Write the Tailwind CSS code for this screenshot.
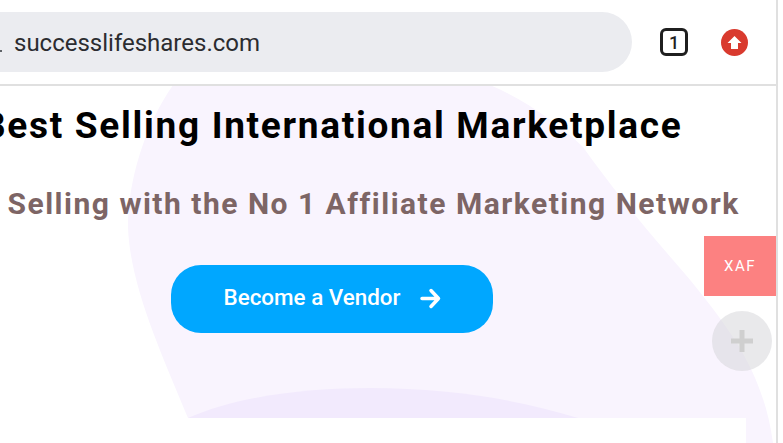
<!DOCTYPE html>
<html><head><meta charset="utf-8"><script src="https://cdn.jsdelivr.net/npm/@tailwindcss/browser@4"></script></head>
<body class="m-0 bg-white">
<div class="relative w-[783px] h-[443px] overflow-hidden bg-white font-['Roboto',sans-serif]">
  <svg class="absolute left-0 top-0" width="783" height="443" viewBox="0 0 783 443" aria-hidden="true">
    <path d="M173 85 C145 125 128 180 128 227 C130 285 160 350 188 418 L746 418 L746 443 L773 443 C768 405 755 372 735 340 C715 310 695 285 673 260 C640 222 610 185 583 147 C560 125 525 100 490 85 Z" fill="#f9f4fe"/>
    <path d="M188 418 C240 395 310 388 370 388 C450 388 520 400 578 418 Z" fill="#f2eafd"/>
  </svg>
  <div class="relative flex flex-col w-[776px]">
    <header class="flex items-center h-[86px] border-b-2 border-[#e0e0e0]">
      <div class="relative flex items-center w-[632px] h-[60px] pl-[14px] pt-[2px] rounded-r-[30px] bg-[#ebecf0] text-[24px] text-[#2b2c30]">
        <span class="absolute left-0 top-[38px] w-[2px] h-[2px] bg-[#5f6368]"></span>
        successlifeshares.com
      </div>
      <div class="ml-[28px] flex items-center justify-center w-[28px] h-[28px] rounded-[6px] border-[3px] border-[#1f1f1f] text-[18px] font-medium text-[#1f1f1f]">1</div>
      <div class="ml-[33px] flex items-center justify-center w-[27px] h-[27px] rounded-full bg-[#d93a2e]">
        <svg width="17" height="17" viewBox="0 0 17 17"><path d="M8.5 2 L15.5 9 H12 V15 H5 V9 H1.500 Z" fill="#fff"/></svg>
      </div>
    </header>
    <main class="flex flex-col">
      <h1 class="mt-[16px] ml-[-18px] text-[37px] leading-[48px] font-bold tracking-[1.7px] text-black whitespace-nowrap">Best Selling International Marketplace</h1>
      <p class="mt-[35px] ml-[7.5px] text-[30px] leading-[38px] font-bold tracking-[1.5px] text-[#7d6565] whitespace-nowrap">Selling with the No 1 Affiliate Marketing Network</p>
      <div class="mt-[42px] ml-[171px] flex items-center justify-center gap-[20px] w-[322px] h-[68px] pb-[2px] rounded-[30px] bg-[#00a7ff] text-[22.4px] font-medium text-white">
        <span class="ml-[1px]">Become a Vendor</span>
        <svg width="21" height="21" viewBox="0 0 21 21" fill="none" stroke="#fff" stroke-width="3.5" stroke-linecap="round" stroke-linejoin="round"><path d="M2 10.500 H18.500 M11 2.500 L18.500 10.500 L11 18.500"/></svg>
      </div>
    </main>
  </div>
  <div class="absolute right-0 top-0 h-full w-[7px] bg-white border-l-[2px] border-[#e0e0e0]"></div>
  <div class="absolute left-[704px] top-[236px] flex items-center justify-center w-[72px] h-[60px] bg-[#fc8181] text-[15px] tracking-[1.5px] text-white">XAF</div>
  <div class="absolute left-[712px] top-[311px] flex items-center justify-center w-[60px] h-[60px] rounded-full bg-[#d4d4d8]/50">
    <svg width="22" height="22" viewBox="0 0 22 22"><path d="M8.500 0 H13.500 V8.500 H22 V13.500 H13.500 V22 H8.500 V13.500 H0 V8.500 H8.500 Z" fill="#cfcfcf"/></svg>
  </div>
</div>
</body></html>
